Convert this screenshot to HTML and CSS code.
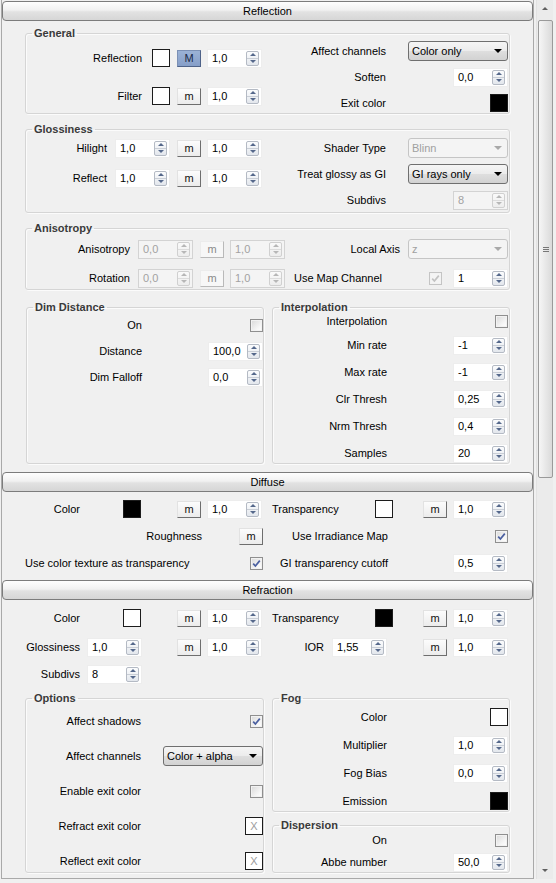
FILE: index.html
```html
<!DOCTYPE html>
<html>
<head>
<meta charset="utf-8">
<link rel="stylesheet" href="styles.css">
</head>
<body>
<div class="window">
  <div class="panel">
    <div class="rhead">Reflection</div>
    <div class="rbody">
      <fieldset class="grp g-general">
        <legend>General</legend>
        <div class="cols">
          <div class="col gen-l">
            <div class="row rj">
              <span class="lbl">Reflection</span>
              <div class="sw wh ml10"></div>
              <div class="btn on ml7">M</div>
              <div class="spin ml6"><span class="v">1,0</span><span class="ar"><i class="u"></i><i class="d"></i></span></div>
            </div>
            <div class="row rj">
              <span class="lbl">Filter</span>
              <div class="sw wh ml10"></div>
              <div class="btn ml7">m</div>
              <div class="spin ml6"><span class="v">1,0</span><span class="ar"><i class="u"></i><i class="d"></i></span></div>
            </div>
          </div>
          <div class="col gen-r">
            <div class="row rr">
              <span class="lbl lw121">Affect channels</span>
              <div class="dd mla"><span class="t">Color only</span><span class="caret"></span></div>
            </div>
            <div class="row rr">
              <span class="lbl lw121">Soften</span>
              <div class="spin mla"><span class="v">0,0</span><span class="ar"><i class="u"></i><i class="d"></i></span></div>
            </div>
            <div class="row rr">
              <span class="lbl lw121">Exit color</span>
              <div class="sw bk mla"></div>
            </div>
          </div>
        </div>
      </fieldset>

      <fieldset class="grp g-gloss">
        <legend>Glossiness</legend>
        <div class="cols">
          <div class="col gl-l">
            <div class="row rj">
              <span class="lbl">Hilight</span>
              <div class="spin ml8"><span class="v">1,0</span><span class="ar"><i class="u"></i><i class="d"></i></span></div>
              <div class="btn ml7">m</div>
              <div class="spin ml6"><span class="v">1,0</span><span class="ar"><i class="u"></i><i class="d"></i></span></div>
            </div>
            <div class="row rj">
              <span class="lbl">Reflect</span>
              <div class="spin ml8"><span class="v">1,0</span><span class="ar"><i class="u"></i><i class="d"></i></span></div>
              <div class="btn ml7">m</div>
              <div class="spin ml6"><span class="v">1,0</span><span class="ar"><i class="u"></i><i class="d"></i></span></div>
            </div>
          </div>
          <div class="col gl-r">
            <div class="row rr">
              <span class="lbl lw121">Shader Type</span>
              <div class="dd dis mla"><span class="t">Blinn</span><span class="caret"></span></div>
            </div>
            <div class="row rr">
              <span class="lbl lw121">Treat glossy as GI</span>
              <div class="dd mla"><span class="t">GI rays only</span><span class="caret"></span></div>
            </div>
            <div class="row rr">
              <span class="lbl lw121">Subdivs</span>
              <div class="spin dis mla"><span class="v">8</span><span class="ar"><i class="u"></i><i class="d"></i></span></div>
            </div>
          </div>
        </div>
      </fieldset>

      <fieldset class="grp g-aniso">
        <legend>Anisotropy</legend>
        <div class="an-rows">
          <div class="an-row">
            <div class="an-l">
              <span class="lbl">Anisotropy</span>
              <div class="spin dis ml8"><span class="v">0,0</span><span class="ar"><i class="u"></i><i class="d"></i></span></div>
              <div class="btn dis ml7">m</div>
              <div class="spin dis ml6"><span class="v">1,0</span><span class="ar"><i class="u"></i><i class="d"></i></span></div>
            </div>
            <div class="an-r">
              <span class="lbl lw114">Local Axis</span>
              <div class="dd dis mla"><span class="t">z</span><span class="caret"></span></div>
            </div>
          </div>
          <div class="an-row">
            <div class="an-l">
              <span class="lbl">Rotation</span>
              <div class="spin dis ml8"><span class="v">0,0</span><span class="ar"><i class="u"></i><i class="d"></i></span></div>
              <div class="btn dis ml7">m</div>
              <div class="spin dis ml6"><span class="v">1,0</span><span class="ar"><i class="u"></i><i class="d"></i></span></div>
            </div>
            <div class="an-r">
              <span class="lbl pl8">Use Map Channel</span>
              <div class="cb dis mla"><svg viewBox="0 0 11 11"><path d="M2.2 5.6 L4.4 8 L8.8 2.6"/></svg></div>
              <div class="spin ml11"><span class="v">1</span><span class="ar"><i class="u"></i><i class="d"></i></span></div>
            </div>
          </div>
        </div>
      </fieldset>

      <div class="split s-dim">
        <fieldset class="grp g-dim">
          <legend>Dim Distance</legend>
          <div class="col dim-c">
            <div class="row rd">
              <span class="lbl lw115">On</span>
              <div class="cb mla"></div>
            </div>
            <div class="row rd">
              <span class="lbl lw115">Distance</span>
              <div class="spin mla"><span class="v">100,0</span><span class="ar"><i class="u"></i><i class="d"></i></span></div>
            </div>
            <div class="row rd">
              <span class="lbl lw115">Dim Falloff</span>
              <div class="spin mla"><span class="v">0,0</span><span class="ar"><i class="u"></i><i class="d"></i></span></div>
            </div>
          </div>
        </fieldset>
        <fieldset class="grp g-interp">
          <legend>Interpolation</legend>
          <div class="col int-c">
            <div class="row sm rr">
              <span class="lbl lw114">Interpolation</span>
              <div class="cb mla"></div>
            </div>
            <div class="row rr">
              <span class="lbl lw114">Min rate</span>
              <div class="spin mla"><span class="v">-1</span><span class="ar"><i class="u"></i><i class="d"></i></span></div>
            </div>
            <div class="row rr">
              <span class="lbl lw114">Max rate</span>
              <div class="spin mla"><span class="v">-1</span><span class="ar"><i class="u"></i><i class="d"></i></span></div>
            </div>
            <div class="row rr">
              <span class="lbl lw114">Clr Thresh</span>
              <div class="spin mla"><span class="v">0,25</span><span class="ar"><i class="u"></i><i class="d"></i></span></div>
            </div>
            <div class="row rr">
              <span class="lbl lw114">Nrm Thresh</span>
              <div class="spin mla"><span class="v">0,4</span><span class="ar"><i class="u"></i><i class="d"></i></span></div>
            </div>
            <div class="row rr">
              <span class="lbl lw114">Samples</span>
              <div class="spin mla"><span class="v">20</span><span class="ar"><i class="u"></i><i class="d"></i></span></div>
            </div>
          </div>
        </fieldset>
      </div>
    </div>

    <div class="rhead h-diffuse">Diffuse</div>
    <div class="rbody b-diffuse">
      <div class="row">
        <span class="lbl lw55">Color</span>
        <div class="sw bk ml43"></div>
        <div class="btn ml36">m</div>
        <div class="spin ml6"><span class="v">1,0</span><span class="ar"><i class="u"></i><i class="d"></i></span></div>
        <span class="lbl lwt ml10">Transparency</span>
        <div class="sw wh"></div>
        <div class="btn ml30">m</div>
        <div class="spin ml6"><span class="v">1,0</span><span class="ar"><i class="u"></i><i class="d"></i></span></div>
      </div>
      <div class="row full">
        <span class="lbl lw177">Roughness</span>
        <div class="btn ml37">m</div>
        <span class="lbl lw125">Use Irradiance Map</span>
        <div class="cb mla"><svg viewBox="0 0 11 11"><path d="M2.2 5.6 L4.4 8 L8.8 2.6"/></svg></div>
      </div>
      <div class="row full">
        <span class="lbl lw225 tl">Use color texture as transparency</span>
        <div class="cb"><svg viewBox="0 0 11 11"><path d="M2.2 5.6 L4.4 8 L8.8 2.6"/></svg></div>
        <span class="lbl lw125">GI transparency cutoff</span>
        <div class="spin mla"><span class="v">0,5</span><span class="ar"><i class="u"></i><i class="d"></i></span></div>
      </div>
    </div>

    <div class="rhead h-refr">Refraction</div>
    <div class="rbody b-refr">
      <div class="row">
        <span class="lbl lw55">Color</span>
        <div class="sw wh ml43"></div>
        <div class="btn ml36">m</div>
        <div class="spin ml6"><span class="v">1,0</span><span class="ar"><i class="u"></i><i class="d"></i></span></div>
        <span class="lbl lwt ml10">Transparency</span>
        <div class="sw bk"></div>
        <div class="btn ml30">m</div>
        <div class="spin ml6"><span class="v">1,0</span><span class="ar"><i class="u"></i><i class="d"></i></span></div>
      </div>
      <div class="row r-gloss">
        <span class="lbl lw55">Glossiness</span>
        <div class="spin ml7"><span class="v">1,0</span><span class="ar"><i class="u"></i><i class="d"></i></span></div>
        <div class="btn ml35">m</div>
        <div class="spin ml6"><span class="v">1,0</span><span class="ar"><i class="u"></i><i class="d"></i></span></div>
        <span class="lbl lw62">IOR</span>
        <div class="spin ml8"><span class="v">1,55</span><span class="ar"><i class="u"></i><i class="d"></i></span></div>
        <div class="btn ml36">m</div>
        <div class="spin ml6"><span class="v">1,0</span><span class="ar"><i class="u"></i><i class="d"></i></span></div>
      </div>
      <div class="row">
        <span class="lbl lw55">Subdivs</span>
        <div class="spin ml7"><span class="v">8</span><span class="ar"><i class="u"></i><i class="d"></i></span></div>
      </div>

      <div class="split s-opt">
        <fieldset class="grp g-opt">
          <legend>Options</legend>
          <div class="col opt-c">
            <div class="row">
              <span class="lbl lw115">Affect shadows</span>
              <div class="cb mla"><svg viewBox="0 0 11 11"><path d="M2.2 5.6 L4.4 8 L8.8 2.6"/></svg></div>
            </div>
            <div class="row">
              <span class="lbl lw115">Affect channels</span>
              <div class="dd mla"><span class="t">Color + alpha</span><span class="caret"></span></div>
            </div>
            <div class="row">
              <span class="lbl lw115">Enable exit color</span>
              <div class="cb mla"></div>
            </div>
            <div class="row">
              <span class="lbl lw115">Refract exit color</span>
              <div class="sw wh x mla">X</div>
            </div>
            <div class="row">
              <span class="lbl lw115">Reflect exit color</span>
              <div class="sw wh x mla">X</div>
            </div>
          </div>
        </fieldset>
        <div class="rstack">
          <fieldset class="grp g-fog">
            <legend>Fog</legend>
            <div class="col fog-c">
              <div class="row rr">
                <span class="lbl lw114">Color</span>
                <div class="sw wh mla"></div>
              </div>
              <div class="row rr">
                <span class="lbl lw114">Multiplier</span>
                <div class="spin mla"><span class="v">1,0</span><span class="ar"><i class="u"></i><i class="d"></i></span></div>
              </div>
              <div class="row rr">
                <span class="lbl lw114">Fog Bias</span>
                <div class="spin mla"><span class="v">0,0</span><span class="ar"><i class="u"></i><i class="d"></i></span></div>
              </div>
              <div class="row rr">
                <span class="lbl lw114">Emission</span>
                <div class="sw bk mla"></div>
              </div>
            </div>
          </fieldset>
          <fieldset class="grp g-disp">
            <legend>Dispersion</legend>
            <div class="col disp-c">
              <div class="row sm rr">
                <span class="lbl lw114">On</span>
                <div class="cb mla"></div>
              </div>
              <div class="row rr">
                <span class="lbl lw114">Abbe number</span>
                <div class="spin mla"><span class="v">50,0</span><span class="ar"><i class="u"></i><i class="d"></i></span></div>
              </div>
            </div>
          </fieldset>
        </div>
      </div>
    </div>
  </div>

  <div class="sb">
    <div class="sb-btn"><span class="tri up"></span></div>
    <div class="sb-thumb"><span class="grip"></span></div>
    <div class="sb-track"></div>
    <div class="sb-btn"><span class="tri down"></span></div>
  </div>
</div>
</body>
</html>
```

FILE: styles.css
```css
* { box-sizing: border-box; }

body {
  margin: 0;
  background: #f0f0f0;
  font: 11px "Liberation Sans", Arial, sans-serif;
  color: #000;
}

.window {
  display: flex;
  height: 883px;
}

.panel {
  width: 533px;
  height: 879px;
  margin-left: 1px;
  border-left: 1px solid #a9a9a9;
  border-right: 1px solid #a9a9a9;
  border-bottom: 1px solid #a9a9a9;
}

/* rollout headers */
.rhead {
  height: 20px;
  margin-top: 1px;
  border: 1px solid #7c7c7c;
  border-radius: 4px;
  background: linear-gradient(#fefefe, #f1f1f1 45%, #e2e2e2 55%, #d6d6d6);
  text-align: center;
  line-height: 18px;
  color: #000;
}
.h-diffuse { margin-top: 8px; }
.h-refr { margin-top: 7px; }

.rbody {
  padding: 0 23px;
}

/* group boxes */
.grp {
  margin: 0;
  padding: 0;
  min-width: 0;
  border: 1px solid #d5d5d5;
  border-radius: 3px;
  box-shadow: inset 1px 1px 0 #fbfbfb, 1px 1px 0 #fbfbfb;
}
.grp > legend {
  margin-left: 6px;
  padding: 0 2px;
  font-weight: bold;
  line-height: 13px;
  color: #3a3a3a;
}

.g-general { margin-top: 6px; }
.g-gloss { margin-top: 9px; padding-bottom: 2px; }
.g-aniso { margin-top: 9px; padding-bottom: 1px; }

.cols {
  display: grid;
  grid-template-columns: 239px 1fr;
}

.col {
  display: flex;
  flex-direction: column;
}
.gen-l { padding-top: 8px; gap: 18px; }
.gen-r { padding-top: 1px; gap: 6px; }
.gl-l { padding-top: 2px; gap: 10px; }
.gl-r { padding-top: 2px; gap: 6px; }

.row {
  display: flex;
  align-items: center;
  height: 20px;
  flex: none;
}
.row.sm { height: 13px; }
.row.rj { justify-content: flex-end; padding-right: 3px; }
.row.rr { padding-right: 1px; }
.row.full { padding-right: 2px; }

.an-rows {
  display: flex;
  flex-direction: column;
  gap: 9px;
  padding-top: 4px;
}
.an-row {
  display: grid;
  grid-template-columns: 260px 1fr;
  height: 20px;
}
.an-l {
  display: flex;
  align-items: center;
  justify-content: flex-end;
  padding-right: 1px;
}
.an-r {
  display: flex;
  align-items: center;
  padding-right: 1px;
}

.split {
  display: flex;
  gap: 8px;
  align-items: stretch;
}
.s-dim { margin-top: 11px; }
.g-dim { width: 238px; margin-left: 1px; }
.g-interp { flex: 1; }
.dim-c { padding-top: 1px; gap: 6px; }
.int-c { padding-top: 1px; gap: 7px; }

.b-diffuse {
  display: flex;
  flex-direction: column;
  gap: 7px;
  padding-top: 7px;
}
.b-refr {
  display: flex;
  flex-direction: column;
  gap: 7px;
  padding-top: 8px;
}
.b-refr .r-gloss { margin-top: 2px; }
.s-opt { margin-top: 1px; }
.g-opt { width: 239px; }
.opt-c { padding-top: 6px; gap: 15px; }
.rstack {
  flex: 1;
  display: flex;
  flex-direction: column;
}
.fog-c { padding-top: 2px; gap: 8px; }
.g-disp { margin-top: 7px; }
.disp-c { padding-top: 2px; gap: 5px; }

/* labels */
.lbl {
  white-space: nowrap;
  line-height: 13px;
  flex: none;
}
.lw55, .lw62, .lw114, .lw115, .lw121, .lw125, .lw177 { text-align: right; }
.lw55 { width: 55px; }
.lw62 { width: 62px; }
.lw114 { width: 114px; }
.lw115 { width: 115px; }
.lw121 { width: 121px; }
.lw125 { width: 125px; }
.lw177 { width: 177px; }
.lw225 { width: 225px; }
.lwt { width: 103px; }
.tl { text-align: left; }
.pl8 { padding-left: 8px; }

.ml6 { margin-left: 6px; }
.ml7 { margin-left: 7px; }
.ml8 { margin-left: 8px; }
.ml10 { margin-left: 10px; }
.ml11 { margin-left: 11px; }
.ml30 { margin-left: 30px; }
.ml35 { margin-left: 35px; }
.ml36 { margin-left: 36px; }
.ml37 { margin-left: 37px; }
.ml43 { margin-left: 43px; }
.mla { margin-left: auto; }

/* colour swatches */
.sw {
  width: 18px;
  height: 18px;
  flex: none;
  border: 1px solid #1c1c1c;
}
.sw.wh { background: #fff; }
.sw.bk { background: #000; }
.sw.x {
  color: #9c9c9c;
  text-align: center;
  line-height: 16px;
  font-size: 11px;
}

/* map buttons */
.btn {
  width: 24px;
  height: 17px;
  flex: none;
  border: 1px solid;
  border-color: #e2e2e2 #6e6e6e #6e6e6e #e2e2e2;
  background: linear-gradient(#fcfcfc, #ececec);
  text-align: center;
  line-height: 15px;
  color: #111;
}
.btn.on {
  background: linear-gradient(#9bb2d6, #859ec8);
  border-color: #7b90b5 #4e6288 #4e6288 #7b90b5;
  color: #1a2948;
}
.btn.dis {
  color: #8a8a8a;
  border-color: #ececec #b9b9b9 #b9b9b9 #ececec;
  background: #f7f7f7;
}

/* spinners */
.spin {
  width: 55px;
  height: 19px;
  flex: none;
  display: flex;
  align-items: center;
  background: #fff;
  border: 1px solid #ededed;
}
.spin .v {
  flex: 1;
  padding-left: 4px;
  line-height: 13px;
}
.spin .ar {
  width: 13px;
  height: 15px;
  margin-right: 2px;
  display: flex;
  flex-direction: column;
  border: 1px solid #b4bac4;
  border-radius: 2px;
  background: linear-gradient(#fbfcfd, #e3e7ed);
}
.ar i {
  flex: 1;
  display: flex;
  align-items: center;
  justify-content: center;
}
.ar i.u { border-bottom: 1px solid #c9ced6; }
.ar i::before {
  content: "";
  border-left: 3px solid transparent;
  border-right: 3px solid transparent;
}
.ar i.u::before { border-bottom: 3px solid #55688b; }
.ar i.d::before { border-top: 3px solid #55688b; }

.spin.dis {
  background: #f4f4f4;
  border-color: #d3d3d3;
  color: #a2a2a2;
}
.spin.dis .ar {
  border-color: #d0d0d0;
  background: linear-gradient(#fafafa, #ededed);
}
.spin.dis .ar i.u { border-bottom-color: #dcdcdc; }
.spin.dis .ar i.u::before { border-bottom-color: #b7b7b7; }
.spin.dis .ar i.d::before { border-top-color: #b7b7b7; }

/* dropdowns */
.dd {
  width: 100px;
  height: 20px;
  flex: none;
  display: flex;
  align-items: center;
  padding: 0 5px 0 3px;
  border: 1px solid #6f6f6f;
  border-radius: 3px;
  background: linear-gradient(#f5f5f5, #ececec 48%, #dedede 52%, #d2d2d2);
}
.dd .t {
  flex: 1;
  line-height: 13px;
  white-space: nowrap;
}
.dd .caret {
  width: 0;
  height: 0;
  border-left: 4px solid transparent;
  border-right: 4px solid transparent;
  border-top: 4px solid #000;
}
.dd.dis {
  border-color: #c5c5c5;
  background: #f4f4f4;
  color: #a0a0a0;
}
.dd.dis .caret { border-top-color: #a9a9a9; }

/* checkboxes */
.cb {
  width: 13px;
  height: 13px;
  flex: none;
  border: 1px solid #8f8f8f;
  background: linear-gradient(135deg, #d9d9d9, #f7f7f7 70%, #ffffff);
  box-shadow: inset 0 0 0 1px #f2f2f2;
}
.cb svg {
  display: block;
  width: 11px;
  height: 11px;
}
.cb svg path {
  fill: none;
  stroke: #4a5fa0;
  stroke-width: 1.7;
}
.cb.dis {
  border-color: #c4c4c4;
  background: #f4f4f4;
}
.cb.dis svg path { stroke: #c2c2c2; }

/* scrollbar */
.sb {
  width: 17px;
  height: 879px;
  margin-left: 2px;
  display: flex;
  flex-direction: column;
  background: #ebebeb;
  border-left: 1px solid #e2e2e2;
}
.sb-btn {
  height: 17px;
  flex: none;
  display: flex;
  align-items: center;
  justify-content: center;
}
.tri {
  width: 0;
  height: 0;
  border-left: 3px solid transparent;
  border-right: 3px solid transparent;
}
.tri.up { border-bottom: 3px solid #606060; }
.tri.down { border-top: 3px solid #606060; }
.sb-thumb {
  height: 458px;
  margin: 3px 0 0 1px;
  width: 15px;
  flex: none;
  border: 1px solid #9a9a9a;
  border-radius: 2px;
  background: linear-gradient(90deg, #f6f6f6, #e8e8e8 50%, #dadada);
  display: flex;
  align-items: center;
  justify-content: center;
}
.grip {
  width: 6px;
  height: 5px;
  border-top: 1px solid #777;
  border-bottom: 1px solid #777;
  background: linear-gradient(#777, #777) center / 100% 1px no-repeat;
}
.sb-track { flex: 1; }
```
